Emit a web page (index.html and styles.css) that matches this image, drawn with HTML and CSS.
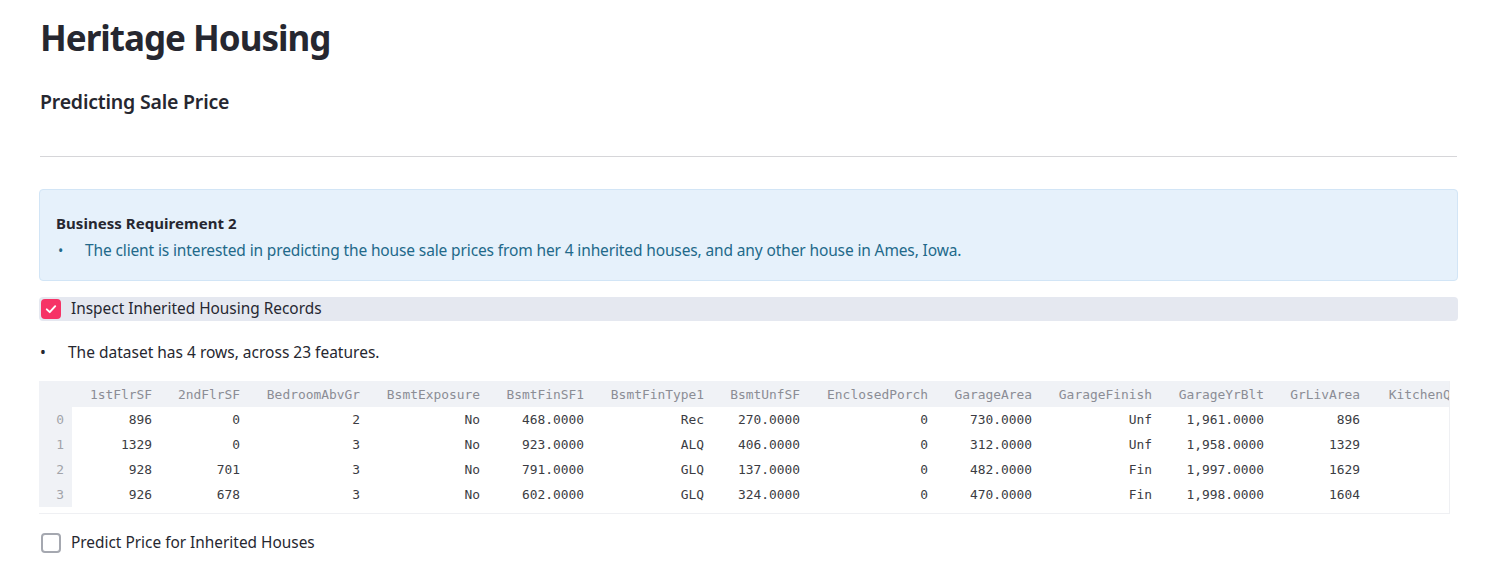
FILE: index.html
```html
<!DOCTYPE html>
<html>
<head>
<meta charset="utf-8">
<link rel="stylesheet" href="styles.css">
</head>
<body>
<main class="main">
  <h1 class="title">Heritage Housing</h1>
  <h3 class="subtitle">Predicting Sale Price</h3>
  <hr class="divider">
  <div class="info">
    <p class="info-head">Business Requirement 2</p>
    <ul class="info-list">
      <li>The client is interested in predicting the house sale prices from her 4 inherited houses, and any other house in Ames, Iowa.</li>
    </ul>
  </div>
  <label class="check-row active">
    <span class="box checked"><svg viewBox="0 0 20 20" width="14" height="14"><path d="M4 10.5 L8.2 14.5 L16 6" fill="none" stroke="#fff" stroke-width="2.8" stroke-linecap="round" stroke-linejoin="round"/></svg></span>
    <span class="check-label">Inspect Inherited Housing Records</span>
  </label>
  <ul class="plain-list">
    <li>The dataset has 4 rows, across 23 features.</li>
  </ul>
  <div class="grid-wrap">
    <table class="grid">
      <colgroup>
        <col class="c33"><col class="c88"><col class="c88"><col class="c120"><col class="c120"><col class="c104"><col class="c120"><col class="c96"><col class="c128"><col class="c104"><col class="c120"><col class="c112"><col class="c96"><col class="c114">
      </colgroup>
      <thead>
        <tr><th class="idx"></th><th>1stFlrSF</th><th>2ndFlrSF</th><th>BedroomAbvGr</th><th>BsmtExposure</th><th>BsmtFinSF1</th><th>BsmtFinType1</th><th>BsmtUnfSF</th><th>EnclosedPorch</th><th>GarageArea</th><th>GarageFinish</th><th>GarageYrBlt</th><th>GrLivArea</th><th>KitchenQual</th></tr>
      </thead>
      <tbody>
        <tr><td class="idx">0</td><td>896</td><td>0</td><td>2</td><td>No</td><td>468.0000</td><td>Rec</td><td>270.0000</td><td>0</td><td>730.0000</td><td>Unf</td><td>1,961.0000</td><td>896</td><td>TA</td></tr>
        <tr><td class="idx">1</td><td>1329</td><td>0</td><td>3</td><td>No</td><td>923.0000</td><td>ALQ</td><td>406.0000</td><td>0</td><td>312.0000</td><td>Unf</td><td>1,958.0000</td><td>1329</td><td>Gd</td></tr>
        <tr><td class="idx">2</td><td>928</td><td>701</td><td>3</td><td>No</td><td>791.0000</td><td>GLQ</td><td>137.0000</td><td>0</td><td>482.0000</td><td>Fin</td><td>1,997.0000</td><td>1629</td><td>Gd</td></tr>
        <tr><td class="idx">3</td><td>926</td><td>678</td><td>3</td><td>No</td><td>602.0000</td><td>GLQ</td><td>324.0000</td><td>0</td><td>470.0000</td><td>Fin</td><td>1,998.0000</td><td>1604</td><td>Gd</td></tr>
      </tbody>
    </table>
  </div>
  <label class="check-row last">
    <span class="box"></span>
    <span class="check-label">Predict Price for Inherited Houses</span>
  </label>
</main>
</body>
</html>
```
FILE: styles.css
```css
* { box-sizing: border-box; }
html, body { margin: 0; padding: 0; background: #fff; }
body {
  font-family: "Noto Sans", "DejaVu Sans", sans-serif;
  color: #262730;
  font-size: 16px;
}
.main {
  width: 1417px;
  margin-left: 40px;
  padding-top: 14px;
}
.title {
  margin: 0;
  font-size: 35px;
  font-weight: 700;
  line-height: 48px;
  letter-spacing: -1px;
}
.subtitle {
  margin: 26px 0 0;
  font-size: 19.5px;
  font-weight: 600;
  line-height: 28px;
  letter-spacing: -0.2px;
}
.divider {
  margin: 40px 0 0;
  border: 0;
  border-top: 1px solid #d6d6d9;
  height: 0;
}
.info {
  margin: 32px -1px 0 -1px;
  background: #e6f1fb;
  border: 1px solid #d2e5f6;
  border-radius: 4px;
  padding: 21px 16px 17px;
}
.info-head {
  margin: 0;
  font-size: 15px;
  font-weight: 700;
  line-height: 24px;
  letter-spacing: 0.05px;
}
.info-list {
  margin: 3px 0 0;
  padding: 0;
  list-style: none;
  color: #22698a;
  line-height: 24px;
  font-size: 15.5px;
  letter-spacing: -0.13px;
}
.info-list li::before {
  content: "•";
  display: inline-block;
  width: 27px;
  padding-left: 2px;
  font-size: 14px;
}
.check-row {
  display: flex;
  align-items: center;
  gap: 10px;
  height: 24px;
  margin: 16px -1px 0 -1px;
  padding-left: 2px;
  border-radius: 4px;
  line-height: 24px;
  font-size: 15.4px;
}
.check-row.active { background: #e5e8f0; }
.box {
  width: 20px;
  height: 20px;
  border-radius: 4px;
  border: 2px solid #a5a8b0;
  background: #fff;
  display: flex;
  align-items: center;
  justify-content: center;
  flex: none;
}
.box.checked { background: #f63366; border-color: #f63366; }
.box svg { display: block; }
.plain-list {
  margin: 19px 0 0;
  padding: 0;
  list-style: none;
  line-height: 24px;
  font-size: 15.5px;
}
.plain-list li::before {
  content: "•";
  display: inline-block;
  width: 28px;
}
.grid-wrap {
  width: 1411px;
  height: 133px;
  margin: 17px 0 0 -1px;
  overflow: hidden;
  border-right: 1px solid #eff0f3;
  border-bottom: 1px solid #eff0f3;
  padding-bottom: 6px;
}
.grid {
  border-collapse: collapse;
  table-layout: fixed;
  width: 1443px;
  font-family: "DejaVu Sans Mono", "Liberation Mono", monospace;
  font-size: 12.9px;
  color: #3b3c43;
}
.c33 { width: 33px; }
.c88 { width: 88px; }
.c96 { width: 96px; }
.c104 { width: 104px; }
.c112 { width: 112px; }
.c114 { width: 114px; }
.c120 { width: 120px; }
.c128 { width: 128px; }
.grid th, .grid td {
  padding: 0 8px 0 0;
  text-align: right;
  white-space: nowrap;
  overflow: hidden;
  font-weight: 400;
}
.grid th {
  height: 26px;
  background: #f0f2f6;
  color: #8b8d95;
}
.grid td { height: 25px; }
.grid td.idx, .grid th.idx {
  background: #f0f2f6;
  color: #a2a4aa;
  padding-right: 8px;
}
.check-row.last { margin-top: 17px; }
```
